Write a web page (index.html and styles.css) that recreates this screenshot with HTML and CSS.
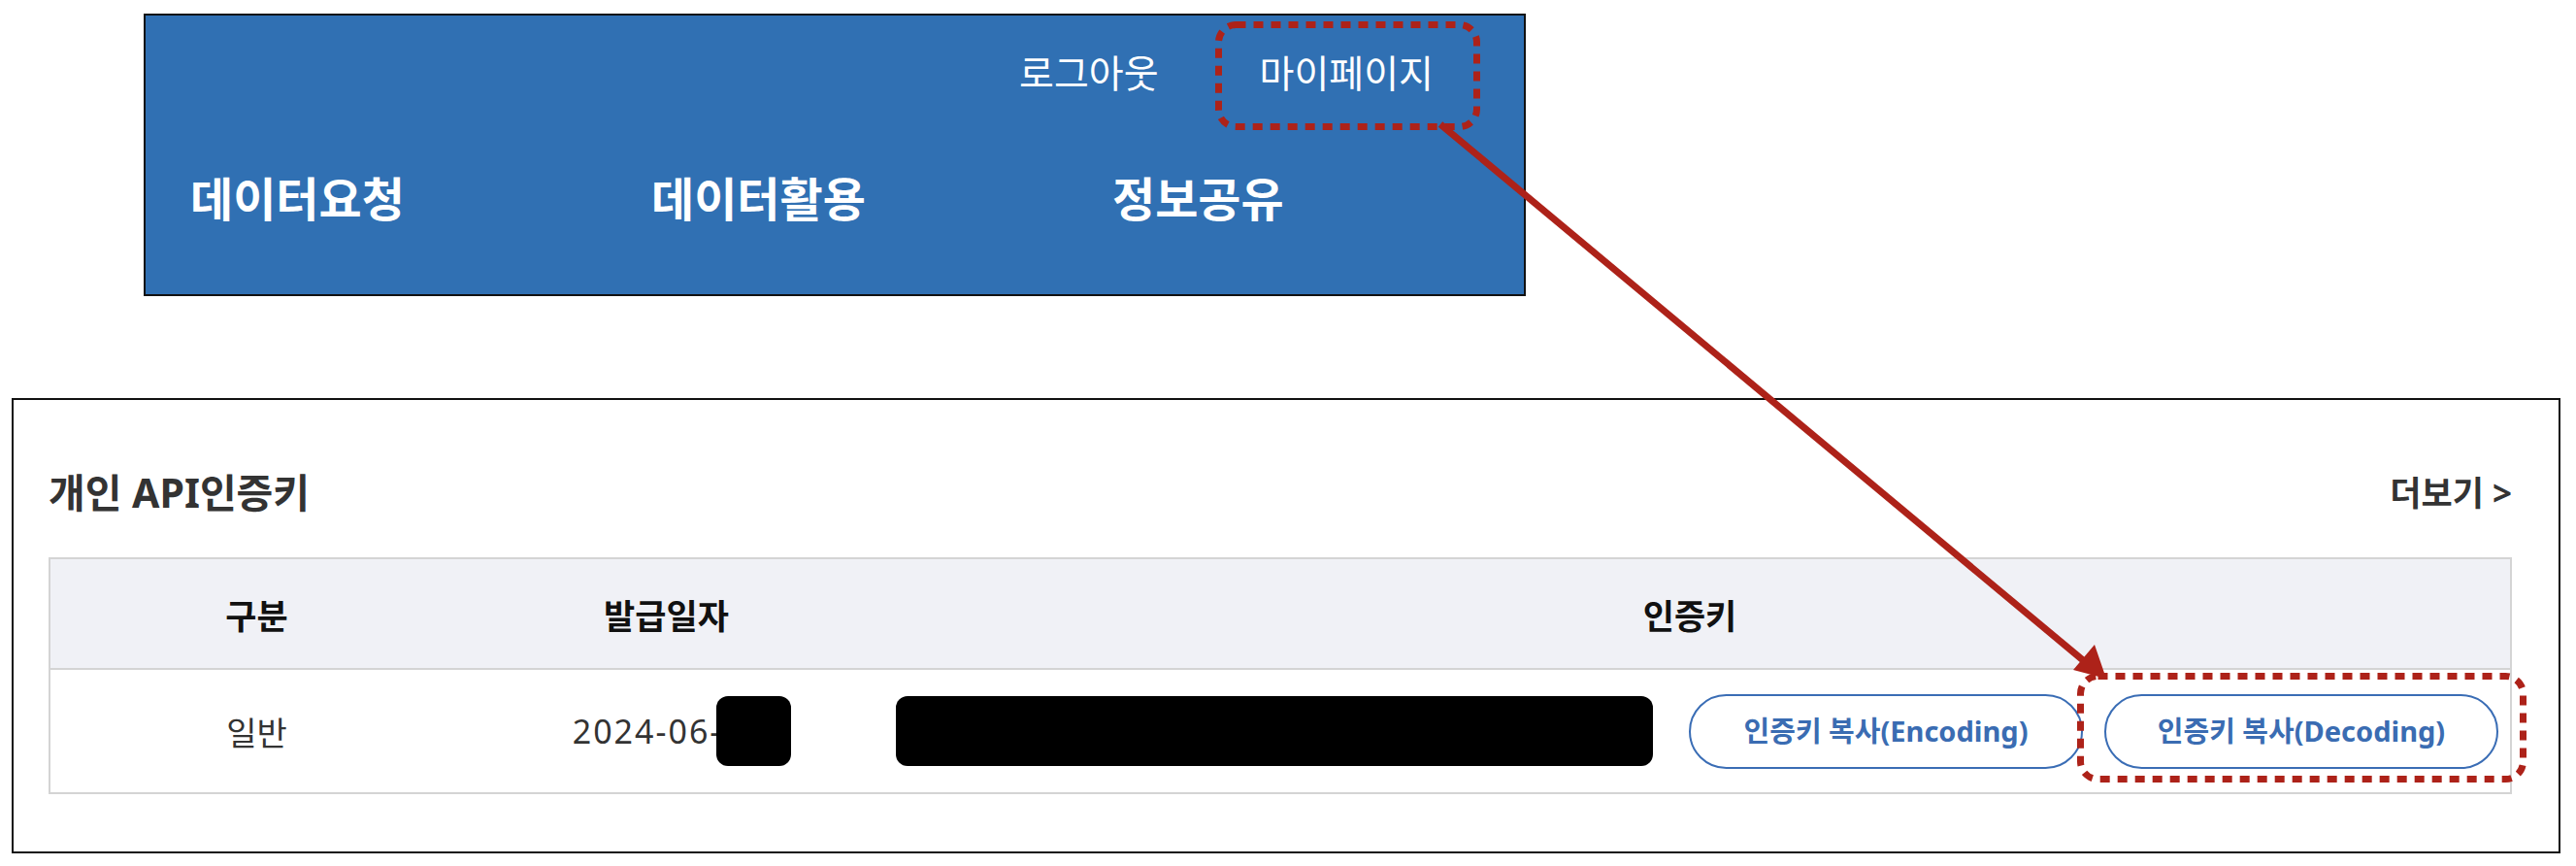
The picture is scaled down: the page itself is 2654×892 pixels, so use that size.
FILE: index.html
```html
<!DOCTYPE html>
<html>
<head lang="ko">
    <meta charset="UTF-8">
    <title>개인 API인증키</title>
    <link rel="stylesheet" href="styles.css">
</head>
<body>
    <div id="header">
        <ul class="util">
            <li><a href="#">로그아웃</a></li>
            <li><a href="#">마이페이지</a></li>
        </ul>
        <ul class="gnb">
            <li><a href="#">데이터요청</a></li>
            <li><a href="#">데이터활용</a></li>
            <li><a href="#">정보공유</a></li>
        </ul>
    </div>

    <div id="apikey">
        <div class="tit">
            <h2>개인 API인증키</h2>
            <a href="#" class="more">더보기 &gt;</a>
        </div>
        <table class="list">
            <colgroup>
                <col class="c1">
                <col class="c2">
                <col>
            </colgroup>
            <thead>
                <tr>
                    <th>구분</th>
                    <th>발급일자</th>
                    <th>인증키</th>
                </tr>
            </thead>
            <tbody>
                <tr>
                    <td>일반</td>
                    <td class="day"><span class="date">2024-06-</span><span class="mask small"></span></td>
                    <td>
                        <div class="keybox">
                            <span class="mask key"></span>
                            <span class="btn">인증키 복사(Encoding)</span>
                            <span class="btn">인증키 복사(Decoding)</span>
                        </div>
                    </td>
                </tr>
            </tbody>
        </table>
    </div>

    <!-- 안내용 표시 (점선 박스 + 화살표) -->
    <svg class="guide" width="2654" height="892" viewBox="0 0 2654 892">
        <rect x="1255.5" y="25.5" width="266" height="105" rx="18" class="dot"/>
        <rect x="2143.5" y="696.5" width="456" height="106" rx="18" class="dot"/>
        <line x1="1484" y1="128" x2="2146" y2="680" class="arrow"/>
        <polygon points="2170,699 2136,690 2158,664" class="head"/>
    </svg>
</body>
</html>
```

FILE: styles.css
```css
*{padding:0;margin:0;box-sizing:border-box}
li{list-style:none;}
a{text-decoration:none;color:inherit;}
body{font-family:"Noto Sans","Noto Sans CJK KR",sans-serif;background:#fff;color:#222;position:relative;width:2654px;height:892px;overflow:hidden;}

#header{width:1424px;height:291px;margin:14px 0 0 148px;background:#3070b3;border:2px solid #111;}
#header .util{display:flex;justify-content:flex-end;gap:104px;padding:34px 93px 0 0;}
#header .util a{display:block;font-size:39px;line-height:50px;color:#fff;}
#header .gnb{display:flex;padding-left:46px;margin-top:75px;}
#header .gnb li{width:475px;flex-shrink:0;}
#header .gnb a{display:block;font-size:48px;line-height:60px;font-weight:700;color:#fff;}

#apikey{width:2626px;height:469px;margin:105px 0 0 12px;border:2px solid #111;padding:68px 48px 0 36px;}
#apikey .tit{display:flex;justify-content:space-between;align-items:center;height:50px;}
#apikey h2{font-size:41px;font-weight:700;color:#333;}
#apikey .more{font-size:35px;font-weight:700;color:#333;}

.list{width:100%;margin-top:44px;border-collapse:collapse;table-layout:fixed;border:2px solid #d4d4d4;}
.list .c1{width:426px;}
.list .c2{width:419px;}
.list th{height:114px;background:#f0f1f6;font-size:35px;font-weight:700;color:#111;border-bottom:2px solid #d4d4d4;}
.list td{height:128px;text-align:center;font-size:34px;color:#333;}
.list td.day{padding-left:32px;}
.list .date{vertical-align:middle;letter-spacing:2px;}
.mask{display:inline-block;background:#000;border-radius:12px;vertical-align:middle;}
.mask.small{width:77px;height:72px;margin-left:-6px;}
.keybox{display:flex;align-items:center;justify-content:flex-end;padding-right:12px;}
.mask.key{width:780px;height:72px;margin-right:37px;}
.btn{display:block;width:406px;height:77px;line-height:71px;border:2px solid #3a6db5;border-radius:40px;color:#3a6cb2;font-size:29px;font-weight:700;text-align:center;cursor:pointer;}
.btn+.btn{margin-left:22px;}

.guide{position:absolute;left:0;top:0;pointer-events:none;}
.guide .dot{fill:none;stroke:#ad2219;stroke-width:7;stroke-dasharray:10 8;}
.guide .arrow{stroke:#ad2219;stroke-width:7;}
.guide .head{fill:#ad2219;}
```
